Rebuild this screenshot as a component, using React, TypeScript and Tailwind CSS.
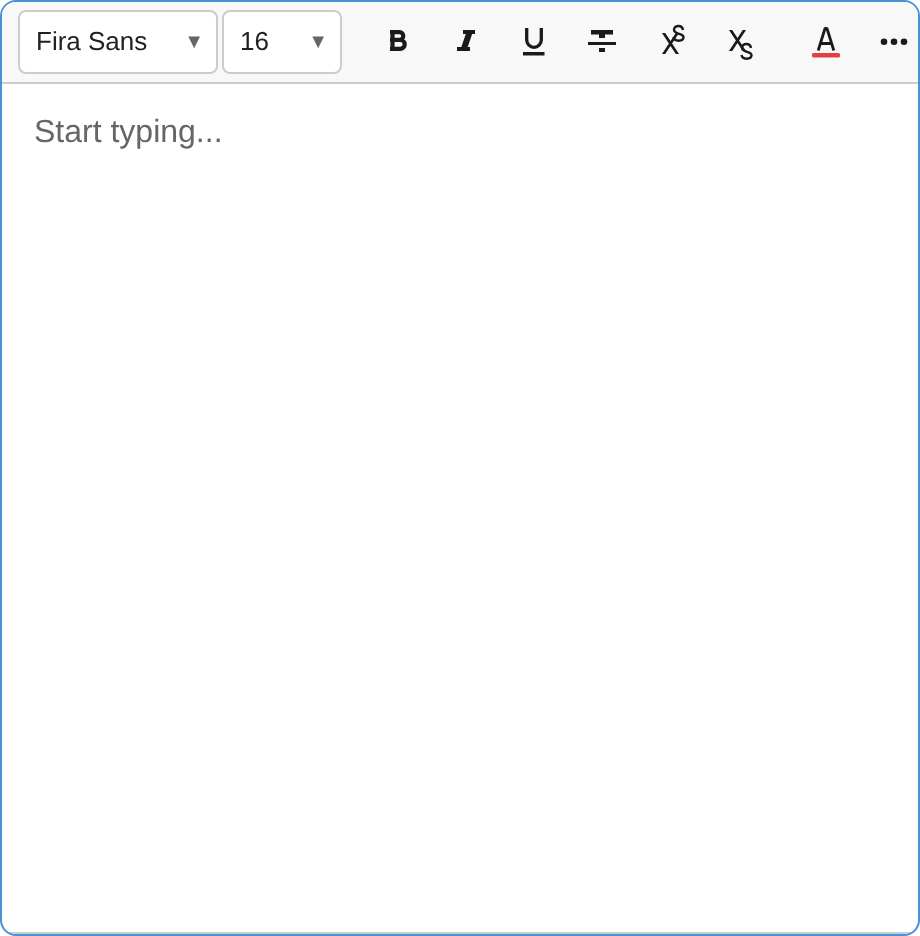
import React from "react";

function Select({ label, width }: { label: string; width: string }) {
  return (
    <div className={`${width} h-16 shrink-0 flex items-center justify-between bg-white border-2 border-[#ccc] rounded-lg pl-4 pr-3 text-[26px] text-[#222]`}>
      <span className="mb-[2px]">{label}</span>
      <span className="text-[20px] text-[#666] mb-[1px]">▼</span>
    </div>
  );
}

function ToolButton({ children, className = "" }: { children: React.ReactNode; className?: string }) {
  return (
    <button className={`w-16 h-16 shrink-0 flex items-center justify-center ${className}`}>
      <svg width="64" height="64" viewBox="0 0 64 64" fill="none" stroke="#1a1a1a">
        {children}
      </svg>
    </button>
  );
}

export default function App() {
  return (
    <div className="w-[920px] h-[936px] flex flex-col overflow-hidden bg-white border-2 border-[#4a90d9] rounded-2xl font-['Liberation_Sans',sans-serif] [text-rendering:geometricPrecision] will-change-transform">
      <div className="h-[82px] shrink-0 flex items-center gap-1 px-4 bg-[#f8f8f8] border-b-2 border-[#ccc]">
        <Select label="Fira Sans" width="w-[200px]" />
        <Select label="16" width="w-[120px]" />

        {/* bold */}
        <ToolButton className="ml-5">
          <path d="M26.500 20v21M24 22.200h9.500a3.800 3.800 0 0 1 0 7.600H24M24 29.800h10.250a4.400 4.400 0 0 1 0 9H24" strokeWidth="4.200" />
        </ToolButton>
        {/* italic */}
        <ToolButton>
          <path d="M29 22h12M23 39h13" strokeWidth="4" />
          <path d="M36 21L29.500 40" strokeWidth="6" />
        </ToolButton>
        {/* underline */}
        <ToolButton>
          <path d="M24.700 18v12a7.300 7.300 0 0 0 14.600 0V18" strokeWidth="3.300" />
          <path d="M21 43.700h21.500" strokeWidth="3.400" />
        </ToolButton>
        {/* strikethrough */}
        <ToolButton>
          <path d="M21 22.200h22" strokeWidth="4.500" />
          <path d="M18 33.500h28" strokeWidth="3" />
          <path d="M32 24v4M32 38v4" strokeWidth="6" />
        </ToolButton>
        {/* superscript */}
        <ToolButton>
          <clipPath id="sup-x">
            <rect x="20" y="23" width="26" height="21" />
          </clipPath>
          <path clipPath="url(#sup-x)" d="M24.300 21L40.700 46M40.700 21L24.300 46" strokeWidth="2.700" />
          <path d="M45 20c-.5-3-2.500-4-4.500-4c-2.500 0-4.500 1.500-4.500 3.800c0 5 9.500 3 9.500 7.200c0 2.500-2 3.700-5 3.700c-2.500 0-4.500-1.200-5-3.700" strokeWidth="2.400" />
        </ToolButton>
        {/* subscript */}
        <ToolButton>
          <clipPath id="sub-x">
            <rect x="19" y="20" width="26" height="21" />
          </clipPath>
          <path clipPath="url(#sub-x)" d="M23.300 18L39.700 43M39.700 18L23.300 43" strokeWidth="2.700" />
          <path d="M45 38c-.5-3-2.500-4-4.500-4c-2.500 0-4.500 1.500-4.500 3.800c0 5 9.500 3 9.500 7.200c0 2.500-2 3.700-5 3.700c-2.500 0-4.500-1.200-5-3.700" strokeWidth="2.400" />
        </ToolButton>

        {/* text colour */}
        <ToolButton className="ml-5">
          <path d="M24.200 40.500L31 18.500h2L39.800 40.500M26.500 33.500h11" strokeWidth="2.800" strokeLinejoin="bevel" />
          <rect x="18" y="43" width="28" height="4.500" rx="1.500" fill="#e53e3e" stroke="none" />
        </ToolButton>
        {/* more */}
        <ToolButton>
          <g fill="#1a1a1a" stroke="none">
            <circle cx="22" cy="31.700" r="3.300" />
            <circle cx="32" cy="31.700" r="3.300" />
            <circle cx="42" cy="31.700" r="3.300" />
          </g>
        </ToolButton>
      </div>
      <div className="flex-1 px-8 pt-[23px] text-[32px] leading-[48px] text-[#666] border-b-2 border-[#ccc]">Start typing...</div>
    </div>
  );
}
